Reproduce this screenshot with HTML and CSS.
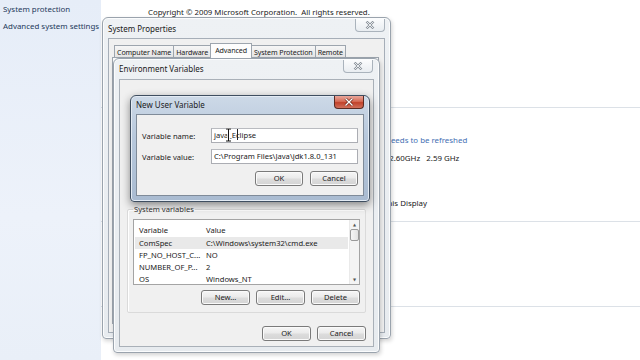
FILE: index.html
```html
<!DOCTYPE html>
<html>
<head>
<meta charset="utf-8">
<link rel="stylesheet" href="styles.css">
</head>
<body>
<div class="desktop">
  <aside class="side">
    <a class="side-link">System protection</a>
    <a class="side-link">Advanced system settings</a>
  </aside>
  <main class="main">
    <p class="copyright">Copyright © 2009 Microsoft Corporation.&nbsp; All rights reserved.</p>
    <hr class="sep sep-1">
    <p class="info link info-rating">needs to be refreshed</p>
    <p class="info info-cpu">@ 2.60GHz&nbsp;&nbsp; 2.59 GHz</p>
    <p class="info info-pen">This Display</p>
    <hr class="sep sep-2">
    <hr class="sep sep-3">
  </main>

  <!-- System Properties -->
  <section class="win inactive win-sys">
    <header class="titlebar">
      <span class="title">System Properties</span>
      <span class="close close-inactive"><svg viewBox="0 0 10 8" width="10" height="8"><path d="M1.5 0.5 L8.5 7.5 M8.5 0.5 L1.5 7.5" stroke="#8c939b" stroke-width="2.4" fill="none"/><path d="M1.5 0.5 L8.5 7.5 M8.5 0.5 L1.5 7.5" stroke="#f4f6f8" stroke-width="0.9" fill="none"/></svg></span>
    </header>
    <div class="body sys-body">
      <nav class="tabs">
        <span class="tab">Computer Name</span>
        <span class="tab">Hardware</span>
        <span class="tab tab-active">Advanced</span>
        <span class="tab">System Protection</span>
        <span class="tab">Remote</span>
      </nav>
      <div class="tabpanel"></div>
    </div>
  </section>

  <!-- Environment Variables -->
  <section class="win inactive win-env">
    <header class="titlebar">
      <span class="title">Environment Variables</span>
      <span class="close close-inactive"><svg viewBox="0 0 10 8" width="10" height="8"><path d="M1.5 0.5 L8.5 7.5 M8.5 0.5 L1.5 7.5" stroke="#8c939b" stroke-width="2.4" fill="none"/><path d="M1.5 0.5 L8.5 7.5 M8.5 0.5 L1.5 7.5" stroke="#f4f6f8" stroke-width="0.9" fill="none"/></svg></span>
    </header>
    <div class="body env-body">
      <div class="uservars"></div>
      <fieldset class="group">
        <legend class="group-label">System variables</legend>
        <div class="list">
          <div class="list-main">
            <div class="row head"><span class="c1">Variable</span><span class="c2">Value</span></div>
            <div class="row sel"><span class="c1">ComSpec</span><span class="c2">C:\Windows\system32\cmd.exe</span></div>
            <div class="row"><span class="c1">FP_NO_HOST_C...</span><span class="c2">NO</span></div>
            <div class="row"><span class="c1">NUMBER_OF_P...</span><span class="c2">2</span></div>
            <div class="row"><span class="c1">OS</span><span class="c2">Windows_NT</span></div>
          </div>
          <div class="scroll">
            <span class="arrow up">▲</span>
            <span class="thumb"></span>
            <span class="track"></span>
            <span class="arrow down">▼</span>
          </div>
        </div>
        <div class="btnrow">
          <span class="btn">New...</span>
          <span class="btn">Edit...</span>
          <span class="btn">Delete</span>
        </div>
      </fieldset>
      <div class="footer">
        <span class="btn">OK</span>
        <span class="btn">Cancel</span>
      </div>
    </div>
  </section>

  <!-- New User Variable -->
  <section class="win active win-nuv">
    <header class="titlebar">
      <span class="title">New User Variable</span>
      <span class="close close-red"><svg viewBox="0 0 10 8" width="10" height="8"><path d="M1.5 0.5 L8.5 7.5 M8.5 0.5 L1.5 7.5" stroke="#6b2418" stroke-width="2.6" fill="none"/><path d="M1.5 0.5 L8.5 7.5 M8.5 0.5 L1.5 7.5" stroke="#ffffff" stroke-width="1.3" fill="none"/></svg></span>
    </header>
    <div class="body nuv-body">
      <div class="field">
        <span class="label">Variable name:</span>
        <span class="input">java_Eclipse</span>
      </div>
      <div class="field">
        <span class="label">Variable value:</span>
        <span class="input">C:\Program Files\Java\jdk1.8.0_131</span>
      </div>
      <div class="footer nuv-footer">
        <span class="btn">OK</span>
        <span class="btn">Cancel</span>
      </div>
    </div>
  </section>

  <svg class="ibeam" width="7" height="14" viewBox="0 0 7 14"><path d="M1 1 H6 M3.5 1 V13 M1 13 H6" stroke="#fff" stroke-width="2.6" fill="none"/><path d="M1 1 H6 M3.5 1 V13 M1 13 H6" stroke="#111" stroke-width="1" fill="none"/></svg>
  <span class="caret"></span>
</div>
</body>
</html>
```
FILE: styles.css
```css
* { box-sizing: border-box; }
html, body { margin: 0; padding: 0; }
body {
  font-family: "Noto Sans", "Open Sans", "DejaVu Sans", sans-serif;
  font-size: 7.6px;
  color: #1a1a1a;
}
.desktop {
  position: relative;
  width: 640px;
  height: 360px;
  overflow: hidden;
  display: grid;
  grid-template-columns: 101px 1fr;
  background: #fff;
}
.side {
  background: linear-gradient(180deg, #e6edf8 0%, #edf2fa 60%, #e9eff8 100%);
  display: flex;
  flex-direction: column;
  padding: 3px 0 0 3px;
  gap: 5px;
}
.side-link {
  color: #1e395b;
  font-size: 7.9px;
  line-height: 12px;
  white-space: nowrap;
}
.main {
  display: flex;
  flex-direction: column;
  background: #fff;
}
.copyright {
  margin: 6px 0 0 47px;
  line-height: 12px;
  white-space: nowrap;
  color: #222;
  font-size: 7.8px;
}
.sep {
  margin: 0;
  border: 0;
  height: 1px;
  background: #dce1e7;
}
.sep-1 { margin-top: 89px; }
.sep-2 { margin-top: 12px; }
.sep-3 { margin-top: 84px; }
.info {
  margin: 0;
  line-height: 12px;
  white-space: nowrap;
  color: #222;
  font-size: 7.9px;
}
.link { color: #3f6fb3; }
.info-rating { margin-top: 26px; padding-left: 285px; }
.info-cpu { margin-top: 6px; padding-left: 279px; }
.info-pen { margin-top: 33px; padding-left: 282px; }

/* windows */
.win {
  position: absolute;
  display: flex;
  flex-direction: column;
  border-radius: 6px 6px 4px 4px;
  padding: 0 5px 5px;
}
.inactive {
  background: linear-gradient(180deg, #eef1f4 0%, #e7ebef 100%);
  border: 1px solid #9aa3ad;
  box-shadow: inset 0 0 0 1px #fbfcfd, 1px 2px 4px rgba(0,0,0,0.18);
}
.active {
  background: linear-gradient(180deg, #cdd9e7 0%, #b7c8dc 40%, #a9bbd1 100%);
  border: 1px solid #3f4e60;
  box-shadow: inset 0 0 0 1px #e3ebf4, 0 3px 8px rgba(0,0,0,0.45);
}
.titlebar {
  display: flex;
  justify-content: space-between;
  align-items: flex-start;
  flex: none;
}
.title {
  white-space: nowrap;
  color: #202020;
  font-size: 8px;
}
.close {
  display: flex;
  align-items: center;
  justify-content: center;
  width: 30px;
  height: 13px;
  border-radius: 0 0 4px 4px;
}
.close-inactive {
  background: linear-gradient(180deg, #fbfcfd, #e9edf1);
  border: 1px solid #aab3bc;
  border-top: 0;
}
.close-red {
  background: linear-gradient(180deg, #e9a79b 0%, #d66b56 45%, #c2422b 55%, #d0705c 100%);
  border: 1px solid #5a2a22;
  border-top: 0;
}
.body {
  flex: 1;
  background: #f0f0f0;
  border: 1px solid #a6aeb8;
  min-height: 0;
}

/* system properties */
.win-sys { left: 102px; top: 17px; width: 289px; height: 322px; }
.win-sys .titlebar { height: 20px; }
.win-sys .title { margin: 5px 0 0 0; line-height: 12px; }
.win-sys .close { margin-top: 1px; margin-right: 0; }
.sys-body {
  display: flex;
  flex-direction: column;
  padding: 4px 5px 8px 3px;
}
.tabs {
  display: flex;
  align-items: flex-end;
  padding-left: 2px;
  height: 15px;
  flex: none;
}
.tab {
  height: 13px;
  line-height: 12px;
  padding: 0 2px;
  border: 1px solid #9da5ae;
  border-bottom: 0;
  margin-right: -1px;
  background: linear-gradient(180deg, #f6f6f6, #e3e3e3);
  white-space: nowrap;
  color: #222;
  font-size: 7.1px;
  letter-spacing: -0.1px;
}
.tab-active {
  height: 15px;
  background: #fdfdfd;
  padding: 0 4px;
  position: relative;
  z-index: 1;
}
.tabpanel {
  flex: 1;
  border: 1px solid #9da5ae;
  background: #fcfcfc;
  margin-top: -1px;
}

/* environment variables */
.win-env { left: 113px; top: 58px; width: 267px; height: 295px; }
.win-env .titlebar { height: 20px; }
.win-env .title { margin: 4px 0 0 0; line-height: 12px; }
.win-env .close { margin-top: 1px; margin-right: 1px; }
.env-body {
  display: flex;
  flex-direction: column;
  padding: 0 7px 6px 7px;
  border-color: #a9b0b8;
}
.uservars {
  height: 124px;
  flex: none;
}
.group {
  margin: 0;
  padding: 2px 5px 7px 5px;
  border: 1px solid #dadada;
  border-radius: 2px;
  box-shadow: inset 1px 1px 0 #fff;
}
.group-label {
  padding: 0 1px;
  margin-left: 0;
  line-height: 10px;
  color: #333;
}
.list {
  display: flex;
  height: 66px;
  border: 1px solid #a4a4a4;
  background: #fff;
  margin-top: 3px;
}
.list-main {
  flex: 1;
  display: flex;
  flex-direction: column;
  padding: 3px 1px 0 1px;
}
.row {
  display: flex;
  height: 12px;
  line-height: 12px;
  white-space: nowrap;
  color: #222;
}
.row.head { height: 15px; line-height: 14px; }
.row.sel { background: #e9e9e9; }
.c1 { width: 71px; padding-left: 4px; overflow: hidden; }
.c2 { flex: 1; }
.scroll {
  width: 10px;
  display: flex;
  flex-direction: column;
  background: #f4f4f4;
  border-left: 1px solid #eaeaea;
}
.arrow {
  height: 9px;
  font-size: 4px;
  line-height: 9px;
  text-align: center;
  color: #555;
}
.thumb {
  height: 12px;
  border: 1px solid #9a9a9a;
  border-radius: 2px;
  background: linear-gradient(90deg, #f6f6f6, #e2e2e2);
}
.track { flex: 1; }
.btnrow {
  display: flex;
  justify-content: flex-end;
  gap: 6px;
  margin-top: 5px;
}
.btn {
  width: 49px;
  height: 15px;
  line-height: 13px;
  text-align: center;
  border: 1px solid #7a7a7a;
  border-radius: 3px;
  background: linear-gradient(180deg, #f6f6f6 0%, #ebebeb 45%, #dcdcdc 55%, #d4d4d4 100%);
  box-shadow: inset 0 0 0 1px #fafafa;
  color: #222;
}
.footer {
  display: flex;
  justify-content: flex-end;
  gap: 6px;
  margin-top: 13px;
}

/* new user variable */
.win-nuv { left: 130px; top: 95px; width: 240px; height: 107px; }
.win-nuv .titlebar { height: 18px; }
.win-nuv .title { margin: 3px 0 0 0; line-height: 12px; color: #1a1a1a; }
.nuv-body {
  padding: 13px 5px 0 5px;
  border-color: #7f8b99;
  display: flex;
  flex-direction: column;
  gap: 6px;
}
.field {
  display: flex;
  align-items: center;
}
.label {
  width: 69px;
  white-space: nowrap;
  color: #222;
}
.input {
  flex: 1;
  height: 15px;
  line-height: 13px;
  padding-left: 2px;
  border: 1px solid #abadb3;
  border-top-color: #b9bbc0;
  background: #fff;
  white-space: nowrap;
  color: #1a1a1a;
}
.nuv-footer { margin-top: 1px; gap: 7px; }
.nuv-footer .btn { width: 48px; }

/* cursor overlays */
.ibeam { position: absolute; left: 225px; top: 128px; }
.caret { position: absolute; left: 237px; top: 129px; width: 1px; height: 11px; background: #222; }
```
